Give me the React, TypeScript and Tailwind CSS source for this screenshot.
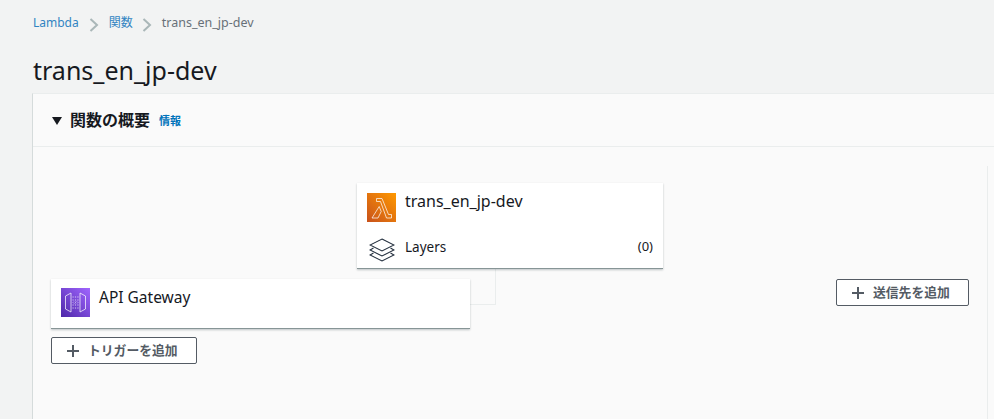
const font = { fontFamily: '"Noto Sans", "Noto Sans CJK JP", sans-serif' };

function Chevron() {
  return (
    <svg width="10" height="14" viewBox="0 0 10 14" fill="none" stroke="#aab7b8" strokeWidth="2" className="relative top-[2px]">
      <path d="M1.5 1 L8 7 L1.5 13" />
    </svg>
  );
}

function Plus() {
  return (
    <svg width="12" height="12" viewBox="0 0 12 12" fill="none" stroke="#545b64" strokeWidth="2" className="shrink-0">
      <path d="M6 0 V12 M0 6 H12" />
    </svg>
  );
}

function LambdaIcon() {
  return (
    <svg width="29" height="29" viewBox="0 0 29 29" className="shrink-0">
      <defs>
        <linearGradient id="lam" x1="0" y1="1" x2="1" y2="0">
          <stop offset="0" stopColor="#c8511b" />
          <stop offset="1" stopColor="#ff9900" />
        </linearGradient>
      </defs>
      <rect width="29" height="29" fill="url(#lam)" />
      <path
        d="M9.5 5.5 H15 L21.5 21.5 H24.5 V25 H19.5 L13.5 8.5 H9.5 Z M12.2 13.5 L14.2 18.5 L11 25 H5 Z"
        fill="none"
        stroke="#fff"
        strokeWidth="0.9"
        strokeOpacity="0.8"
      />
    </svg>
  );
}

function GatewayIcon() {
  return (
    <svg width="29" height="29" viewBox="0 0 29 29" className="shrink-0">
      <defs>
        <linearGradient id="gw" x1="0" y1="1" x2="1" y2="0">
          <stop offset="0" stopColor="#4d27a8" />
          <stop offset="1" stopColor="#a166ff" />
        </linearGradient>
      </defs>
      <rect width="29" height="29" fill="url(#gw)" />
      <g fill="none" stroke="#fff" strokeWidth="0.9" strokeOpacity="0.8">
        <path d="M4.5 8 L10 5 V24 L4.5 21 Z" />
        <path d="M24.5 8 L19 5 V24 L24.5 21 Z" />
        <path d="M11.5 9 H17.5 M11.5 20 H17.5" strokeDasharray="1.2 1.2" />
        <path d="M11.5 12 H17.5 M11.5 17 H17.5" strokeDasharray="1.2 1.2" />
        <path d="M13 13.5 L12 14.5 L13 15.5 M16 13.5 L17 14.5 L16 15.5 M15 13.5 L14 15.5" strokeWidth="0.7" />
      </g>
    </svg>
  );
}

function LayersIcon() {
  return (
    <svg width="26" height="24" viewBox="0 0 26 24" fill="none" stroke="#232f3e" strokeWidth="1.1" className="shrink-0">
      <path d="M13 1 L25 7 L13 13 L1 7 Z" />
      <path d="M4.5 10 L1 12 L13 18 L25 12 L21.5 10" />
      <path d="M4.5 15 L1 17 L13 23 L25 17 L21.5 15" />
    </svg>
  );
}

function AddButton({ label, className }: { label: string; className: string }) {
  return (
    <button
      className={`absolute h-[27px] flex items-center pl-[15px] gap-[9px] bg-white border border-[#545b64] rounded-[2px] text-[12.8px] font-bold text-[#545b64] ${className}`}
    >
      <Plus />
      <span>{label}</span>
    </button>
  );
}

export default function App() {
  return (
    <div style={font} className="w-[994px] h-[419px] overflow-hidden bg-[#f2f3f3] text-[#16191f] flex flex-col">
      <nav className="flex items-center h-[15px] mt-[15px] ml-[33px] text-[12px] leading-[15px]">
        <span className="text-[#3184c2]">Lambda</span>
        <span className="ml-[10px] mr-[10px] flex"><Chevron /></span>
        <span className="text-[#3184c2]">関数</span>
        <span className="ml-[9px] mr-[10px] flex"><Chevron /></span>
        <span className="text-[#687078] text-[12.5px]">trans_en_jp-dev</span>
      </nav>
      <h1 className="mt-[24px] ml-[33px] text-[25px] leading-[32px] font-normal h-[32px]">trans_en_jp-dev</h1>
      <section className="mt-[7px] ml-[32px] flex-1 min-h-0 bg-[#fafafa] border-l border-t border-[#d5dbdb] border-t-[#eaeded] flex flex-col">
        <header className="h-[53px] shrink-0 border-b border-[#eaeded] flex items-center pl-[19px]">
          <svg width="10" height="8" viewBox="0 0 10 8" className="mr-[8px] mt-[1px]">
            <path d="M0 0 H10 L5 8 Z" fill="#16191f" />
          </svg>
          <h2 className="text-[16px] font-bold leading-[20px]">関数の概要</h2>
          <a className="ml-[9px] text-[11px] font-bold text-[#0073bb] mt-[2px]">情報</a>
        </header>
        <div className="relative flex-1">
          {/* connector */}
          <div className="absolute left-[437px] top-[121px] w-[26px] h-[37px] border-r border-b border-[#eaeded]" />
          <div className="absolute left-[954px] top-[19px] bottom-0 w-px bg-[#eaeded]" />

          {/* lambda node */}
          <div className="absolute left-[324px] top-[36px] w-[306px] h-[86px] bg-white border-b border-[#879596] shadow-[0_1px_2px_rgba(0,28,36,0.25)] pl-[10px] pr-[10px] pt-[10px] flex flex-col">
            <div className="flex items-start gap-[9px]">
              <LambdaIcon />
              <span className="text-[16px] leading-[19px] relative -top-[1px]">trans_en_jp-dev</span>
            </div>
            <div className="flex items-center gap-[9px] mt-[16px] text-[13.5px]">
              <span className="w-[29px] flex justify-center"><LayersIcon /></span>
              <span className="flex-1 relative -top-[3px]">Layers</span>
              <span className="relative -top-[3px] text-[13px]">(0)</span>
            </div>
          </div>

          {/* gateway node */}
          <div className="absolute left-[18px] top-[132px] w-[419px] h-[50px] bg-white border-b border-[#879596] shadow-[0_1px_2px_rgba(0,28,36,0.25)] pl-[10px] pr-[10px] pt-[9px] flex items-start gap-[9px]">
            <GatewayIcon />
            <span className="text-[15.5px] leading-[19px]">API Gateway</span>
          </div>

          <AddButton label="トリガーを追加" className="left-[18px] top-[190px] w-[146px]" />
          <AddButton label="送信先を追加" className="left-[803px] top-[132px] w-[133px]" />
        </div>
      </section>
    </div>
  );
}
